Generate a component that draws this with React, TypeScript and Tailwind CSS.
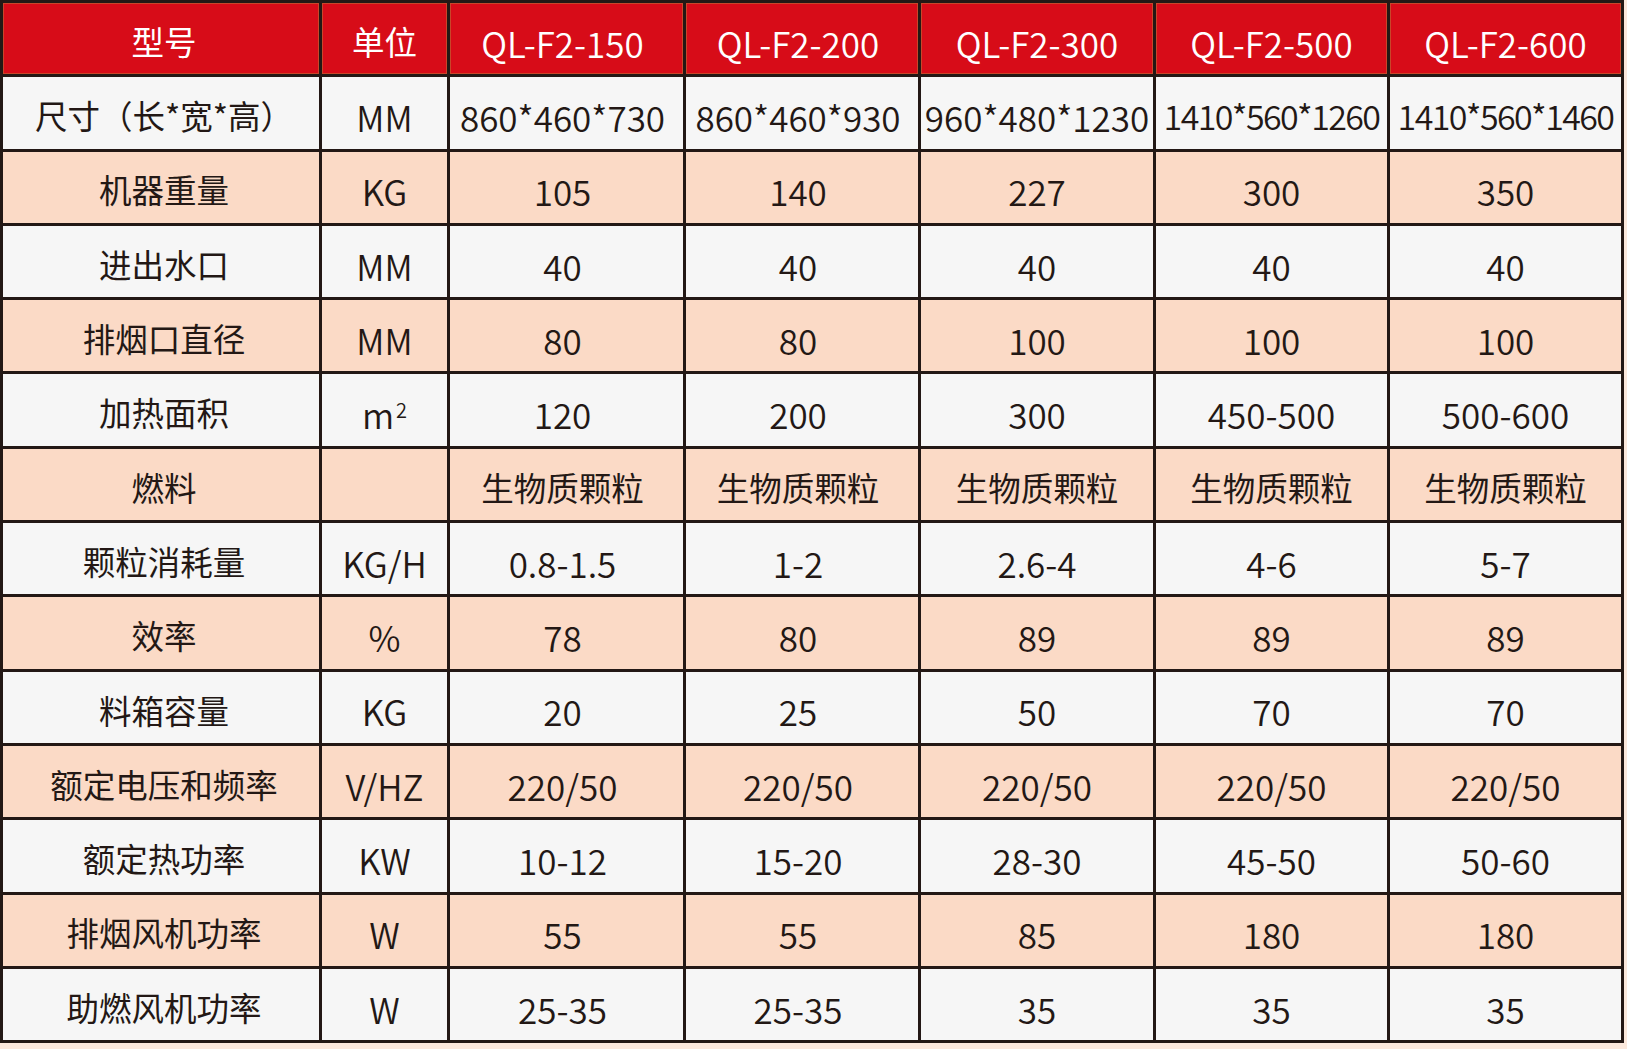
import React from 'react'

const models = ['QL-F2-150', 'QL-F2-200', 'QL-F2-300', 'QL-F2-500', 'QL-F2-600']

const rows: { label: string; unit: React.ReactNode; values: string[] }[] = [
  { label: '尺寸（长*宽*高）', unit: 'MM', values: ['860*460*730', '860*460*930', '960*480*1230', '1410*560*1260', '1410*560*1460'] },
  { label: '机器重量', unit: 'KG', values: ['105', '140', '227', '300', '350'] },
  { label: '进出水口', unit: 'MM', values: ['40', '40', '40', '40', '40'] },
  { label: '排烟口直径', unit: 'MM', values: ['80', '80', '100', '100', '100'] },
  {
    label: '加热面积',
    unit: (
      <span>
        m<span className="relative -top-[11px] ml-[2px] text-[20px]">2</span>
      </span>
    ),
    values: ['120', '200', '300', '450-500', '500-600'],
  },
  { label: '燃料', unit: '', values: ['生物质颗粒', '生物质颗粒', '生物质颗粒', '生物质颗粒', '生物质颗粒'] },
  { label: '颗粒消耗量', unit: 'KG/H', values: ['0.8-1.5', '1-2', '2.6-4', '4-6', '5-7'] },
  { label: '效率', unit: '%', values: ['78', '80', '89', '89', '89'] },
  { label: '料箱容量', unit: 'KG', values: ['20', '25', '50', '70', '70'] },
  { label: '额定电压和频率', unit: 'V/HZ', values: ['220/50', '220/50', '220/50', '220/50', '220/50'] },
  { label: '额定热功率', unit: 'KW', values: ['10-12', '15-20', '28-30', '45-50', '50-60'] },
  { label: '排烟风机功率', unit: 'W', values: ['55', '55', '85', '180', '180'] },
  { label: '助燃风机功率', unit: 'W', values: ['25-35', '25-35', '35', '35', '35'] },
]

const isCjk = (s: string) => /[\u4e00-\u9fff]/.test(s)

// the first two model columns sit a little left of centre in the original
const colPad = ['pr-[8px]', 'pr-[8px]', '', '', '']

function Cell({ children, bg, cjk, extra = '' }: { children: React.ReactNode; bg: string; cjk: boolean; extra?: string }) {
  return (
    <div
      className={`${bg} flex items-center justify-center whitespace-nowrap overflow-hidden ${
        cjk ? 'text-[32.5px] pt-[5px] font-normal' : 'text-[35px] pt-[7px] font-[350]'
      } ${extra}`}
    >
      {children}
    </div>
  )
}

export default function App() {
  return (
    <div className="w-[1627px] h-[1049px] bg-[#fbe8dc] font-['Noto_Sans_CJK_SC','Noto_Sans',sans-serif] text-[#231815] leading-none">
      <div className="w-[1624px] grid grid-cols-[316px_125px_233px_232px_232px_231px_231px] auto-rows-[71.3px] gap-[3px] p-[3px] bg-[#231815]">
        <div className="bg-[#d70c18] text-white shadow-[inset_0_0_0_1px_#c9462a] flex items-center justify-center text-[32.5px] pt-[6px] pl-[6px]">型号</div>
        <div className="bg-[#d70c18] text-white shadow-[inset_0_0_0_1px_#c9462a] flex items-center justify-center text-[32.5px] pt-[6px]">单位</div>
        {models.map((m, j) => (
          <div
            key={m}
            className={`bg-[#d70c18] text-white shadow-[inset_0_0_0_1px_#c9462a] flex items-center justify-center text-[35px] pt-[8px] font-[350] ${colPad[j]}`}
          >
            {m}
          </div>
        ))}

        {rows.map((r, i) => {
          const bg = i % 2 === 0 ? 'bg-[#f6f6f6]' : 'bg-[#fbdac6]'
          return (
            <React.Fragment key={r.label}>
              <Cell bg={bg} cjk extra="pl-[6px]">
                {r.label}
              </Cell>
              <Cell bg={bg} cjk={false}>
                {r.unit}
              </Cell>
              {r.values.map((v, j) => {
                const tight = v.length >= 13 ? 'tracking-[-1.6px] !text-[34px]' : ''
                return (
                  <Cell key={j} bg={bg} cjk={isCjk(v)} extra={`${colPad[j]} ${tight}`}>
                    {v}
                  </Cell>
                )
              })}
            </React.Fragment>
          )
        })}
      </div>
    </div>
  )
}
